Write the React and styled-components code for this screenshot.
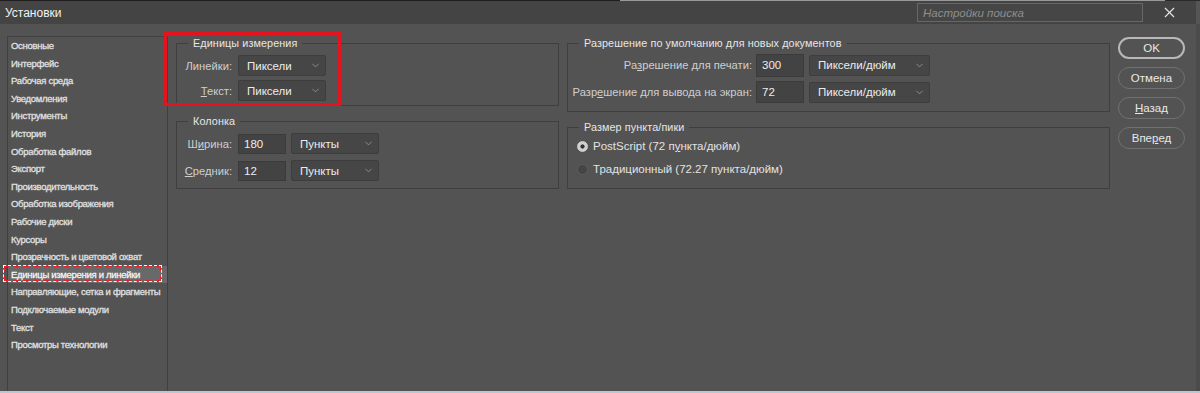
import React from 'react';
import styled, { createGlobalStyle } from 'styled-components';
import { ChevronDown, X } from 'lucide-react';

const GlobalStyle = createGlobalStyle`
  html, body {
    margin: 0;
    padding: 0;
    background: #3c3c3c;
  }
  body {
    font-family: "Liberation Sans", Arial, sans-serif;
    color: #e2e2e2;
  }
`;

const Window = styled.div`
  width: 1200px;
  height: 393px;
  display: flex;
  flex-direction: column;
  background: #535353;
  border-bottom: 2px solid #b7c7d4;
  box-sizing: border-box;
  overflow: hidden;
`;

const TopStrip = styled.div`
  height: 1px;
  background: linear-gradient(90deg, #1e1e1e 0 620px, #9a9a9a 620px 1165px, #2a2a2a 1165px);
`;

const TitleBar = styled.div`
  height: 23px;
  display: flex;
  align-items: center;
  background: #444444;
  padding: 0 0 0 5px;
  border-right: 4px solid #555;
`;

const Title = styled.div`
  font-size: 12px;
  color: #f2f2f2;
  flex-grow: 1;
`;

const Search = styled.div`
  width: 226px;
  height: 19px;
  box-sizing: border-box;
  border: 1px solid #676767;
  background: #464646;
  display: flex;
  align-items: center;
  padding-left: 5px;
  font-size: 11.5px;
  font-style: italic;
  color: #8e8e8e;
`;

const Close = styled.div`
  width: 53px;
  display: flex;
  justify-content: center;
  color: #e6e6e6;
  svg {
    width: 17px;
    height: 17px;
  }
`;

const Body = styled.div`
  flex-grow: 1;
  display: flex;
  gap: 8px;
  padding: 12px 0 0 7px;
  border-right: 4px solid #4b4b4b;
  position: relative;
`;

const Sidebar = styled.div`
  width: 159px;
  border: 1px solid #404040;
  border-bottom: none;
  position: relative;
`;

const NavItem = styled.div`
  height: 17.6px;
  line-height: 17.6px;
  padding-left: 3px;
  font-size: 9.5px;
  letter-spacing: -0.3px;
  -webkit-text-stroke: 0.3px currentColor;
  color: ${p => (p.$active ? '#f4f4f4' : '#e0e0e0')};
  background: ${p => (p.$active ? '#696969' : 'transparent')};
  white-space: nowrap;
`;

const Marquee = styled.div`
  position: absolute;
  left: -5px;
  top: 228px;
  width: 155px;
  height: 13px;
  border: 2px dashed #e3232b;
  outline: 1px dashed #ffffff;
  outline-offset: -1px;
`;

const Columns = styled.div`
  display: flex;
  gap: 8px;
  align-items: flex-start;
`;

const Column = styled.div`
  display: flex;
  flex-direction: column;
  gap: 1px;
  width: ${p => p.$width}px;
`;

const Group = styled.fieldset`
  margin: 0;
  padding: ${p => p.$pad || '5px 0 4px 0'};
  border: 1px solid #3f3f3f;
  height: ${p => p.$height}px;
  box-sizing: border-box;
  margin-top: ${p => p.$top || 0}px;
  display: flex;
  flex-direction: column;
  gap: ${p => p.$gap || 4}px;
`;

const Legend = styled.legend`
  font-size: 10.8px;
  line-height: 14px;
  padding: 0 5px;
  margin-left: 11px;
  color: #e6e6e6;
  letter-spacing: 0.1px;
`;

const Row = styled.div`
  display: flex;
  align-items: center;
  height: ${p => p.$h || 21}px;
`;

const Label = styled.div`
  width: ${p => p.$width}px;
  text-align: right;
  font-size: 11.2px;
  color: #cfcfcf;
  flex-shrink: 0;
  white-space: nowrap;
  margin-right: ${p => p.$gap || 6}px;
`;

const Select = styled.div`
  width: ${p => p.$width}px;
  height: 21px;
  box-sizing: border-box;
  border: 1px solid #3d3d3d;
  border-radius: 2px;
  background: #464646;
  display: flex;
  align-items: center;
  padding: 0 4px 0 8px;
  font-size: 11.5px;
  color: #ececec;
  span {
    flex-grow: 1;
  }
  svg {
    width: 11px;
    height: 11px;
    color: #a8a8a8;
  }
`;

const Input = styled.div`
  width: 48px;
  height: ${p => p.$h || 20}px;
  box-sizing: border-box;
  border: 1px solid #3b3b3b;
  background: #434343;
  display: flex;
  align-items: center;
  padding-left: 5px;
  font-size: 11.5px;
  color: #ececec;
  margin-right: 5px;
`;

const Radio = styled.div`
  width: 11px;
  height: 11px;
  border-radius: 50%;
  box-sizing: border-box;
  margin: 0 5px 0 9px;
  border: 1px solid ${p => (p.$on ? '#d0d0d0' : '#5e5e5e')};
  background: ${p => (p.$on ? 'radial-gradient(circle, #333 0 1.8px, #d0d0d0 2.4px)' : '#454545')};
`;

const RadioText = styled.div`
  font-size: 11.5px;
  color: #e2e2e2;
`;

const Buttons = styled.div`
  display: flex;
  flex-direction: column;
  gap: 8px;
  padding-top: 1px;
`;

const Button = styled.button`
  width: 67px;
  height: 22px;
  border-radius: 11px;
  border: ${p => (p.$primary ? '2px solid #b8b8b8' : '1.5px solid #707070')};
  background: #535353;
  color: #e8e8e8;
  font-family: "Liberation Sans", Arial, sans-serif;
  font-size: 11.5px;
  padding: 0;
`;

const Highlight = styled.div`
  position: absolute;
  left: 164px;
  top: 8px;
  width: 171px;
  height: 68px;
  border: 3px solid #e5131d;
  pointer-events: none;
`;

const navItems = [
  'Основные',
  'Интерфейс',
  'Рабочая среда',
  'Уведомления',
  'Инструменты',
  'История',
  'Обработка файлов',
  'Экспорт',
  'Производительность',
  'Обработка изображения',
  'Рабочие диски',
  'Курсоры',
  'Прозрачность и цветовой охват',
  'Единицы измерения и линейки',
  'Направляющие, сетка и фрагменты',
  'Подключаемые модули',
  'Текст',
  'Просмотры технологии',
];

const Dropdown = ({ width, children }) => (
  <Select $width={width}>
    <span>{children}</span>
    <ChevronDown strokeWidth={1.5} />
  </Select>
);

const App = () => {
  return (
    <>
      <GlobalStyle />
      <Window>
        <TopStrip />
        <TitleBar>
          <Title>Установки</Title>
          <Search>Настройки поиска</Search>
          <Close>
            <X strokeWidth={1.5} />
          </Close>
        </TitleBar>
        <Body>
          <Sidebar>
            {navItems.map(item => (
              <NavItem key={item} $active={item === 'Единицы измерения и линейки'}>
                {item}
              </NavItem>
            ))}
            <Marquee />
          </Sidebar>
          <Columns>
            <Column $width={383}>
              <Group $height={70}>
                <Legend>Единицы измерения</Legend>
                <Row>
                  <Label $width={55}>Линейки:</Label>
                  <Dropdown width={88}>Пиксели</Dropdown>
                </Row>
                <Row>
                  <Label $width={55}>
                    <u>Т</u>екст:
                  </Label>
                  <Dropdown width={88}>Пиксели</Dropdown>
                </Row>
              </Group>
              <Group $height={75} $top={7} $pad="5px 0 6px 0" $gap={6}>
                <Legend>Колонка</Legend>
                <Row>
                  <Label $width={55}>
                    Ш<u>и</u>рина:
                  </Label>
                  <Input>180</Input>
                  <Dropdown width={88}>Пункты</Dropdown>
                </Row>
                <Row>
                  <Label $width={55}>
                    <u>С</u>редник:
                  </Label>
                  <Input>12</Input>
                  <Dropdown width={88}>Пункты</Dropdown>
                </Row>
              </Group>
            </Column>
            <Column $width={543}>
              <Group $height={76} $pad="4px 0 6px 0" $gap={5}>
                <Legend>Разрешение по умолчанию для новых документов</Legend>
                <Row $h={22}>
                  <Label $width={184} $gap={4}>
                    Ра<u>з</u>решение для печати:
                  </Label>
                  <Input $h={23}>300</Input>
                  <Dropdown width={121}>Пиксели/дюйм</Dropdown>
                </Row>
                <Row $h={22}>
                  <Label $width={184} $gap={4}>
                    Разр<u>е</u>шение для вывода на экран:
                  </Label>
                  <Input $h={22}>72</Input>
                  <Dropdown width={121}>Пиксели/дюйм</Dropdown>
                </Row>
              </Group>
              <Group $height={69} $top={7} $pad="3px 0 6px 0" $gap={5}>
                <Legend>Размер пункта/пики</Legend>
                <Row $h={18}>
                  <Radio $on />
                  <RadioText>
                    PostScript (72 п<u>у</u>нкта/дюйм)
                  </RadioText>
                </Row>
                <Row $h={18}>
                  <Radio />
                  <RadioText>
                    Тра<u>д</u>иционный (72.27 пункта/дюйм)
                  </RadioText>
                </Row>
              </Group>
            </Column>
            <Buttons>
              <Button $primary>OK</Button>
              <Button>Отмена</Button>
              <Button>
                <u>Н</u>азад
              </Button>
              <Button>
                Впе<u>р</u>ед
              </Button>
            </Buttons>
          </Columns>
          <Highlight />
        </Body>
      </Window>
    </>
  );
};

export default App;
